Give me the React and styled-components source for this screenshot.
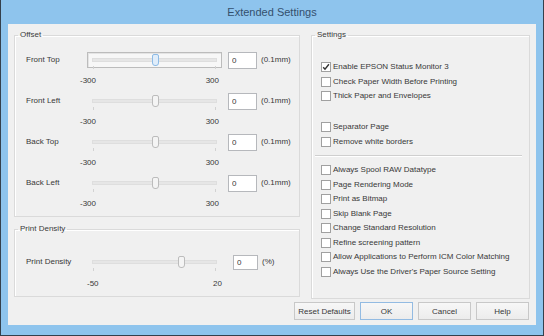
import React from "react";
import styled, { createGlobalStyle } from "styled-components";

const GlobalStyle = createGlobalStyle`
	html,
	body {
		margin: 0;
		padding: 0;
		background: #ffffff;
	}
	body {
		font-family: "Liberation Sans", Arial, sans-serif;
		color: #383838;
	}
`;

const Window = styled.div`
	box-sizing: border-box;
	width: 544px;
	height: 336px;
	display: flex;
	flex-direction: column;
	padding: 0 7px 10px;
	background: #8ec4ed;
	border: 1px solid #34404c;
	border-top: none;
`;

const TitleBar = styled.div`
	height: 24px;
	flex: none;
	display: flex;
	align-items: center;
	justify-content: center;
	font-size: 11px;
	color: #34506d;
`;

const Body = styled.div`
	flex: 1;
	display: grid;
	grid-template-columns: 286px 219px;
	grid-template-rows: 1fr auto;
	column-gap: 11px;
	row-gap: 3px;
	padding: 6px 6px 5px;
	background: #f0f0f0;
	font-size: 8px;
`;

const Column = styled.div`
	display: flex;
	flex-direction: column;
	gap: 7px;
`;

const Group = styled.fieldset`
	margin: 0;
	min-width: 0;
	padding: ${(p) => p.$pad};
	border: 1px solid #dadada;
	box-shadow: inset 1px 1px 0 #ffffff;
	display: flex;
	flex-direction: column;
	gap: 6px;
	flex: ${(p) => (p.$grow ? 1 : "none")};
`;

const Legend = styled.legend`
	padding: 0 2px;
	margin-left: 3px;
	font-size: 8px;
	line-height: 10px;
	color: #3a3a3a;
`;

const SliderBlock = styled.div`
	display: grid;
	grid-template-columns: 61px 135px auto;
	grid-template-rows: 18px 10px;
	row-gap: ${(p) => p.$scaleGap}px;
	padding-left: 11px;
	align-items: center;
`;

const RowLabel = styled.span`
	line-height: 10px;
`;

const SliderBox = styled.div`
	box-sizing: border-box;
	height: 16px;
	display: flex;
	align-items: center;
	padding: 0 4px;
	border: 1px solid ${(p) => (p.$focused ? "#bcbcbc" : "transparent")};
	background: ${(p) => (p.$focused ? "#f7f7f7" : "transparent")};
	box-shadow: ${(p) => (p.$focused ? "inset 1px 1px 0 #e4e4e4" : "none")};
`;

const Track = styled.div`
	position: relative;
	flex: 1;
	height: 2px;
	background: #e6e6e6;
	border: 1px solid #dedede;

	&::before,
	&::after {
		content: "";
		position: absolute;
		top: 7px;
		width: 1px;
		height: 3px;
		background: #d2d2d2;
	}
	&::before {
		left: 0;
	}
	&::after {
		right: 0;
	}
`;

const Thumb = styled.div`
	position: absolute;
	top: -5px;
	width: 5px;
	height: 10px;
	margin-left: -3px;
	border: 1px solid ${(p) => (p.$active ? "#8dbbe6" : "#bcbcbc")};
	border-radius: 2px 2px 3px 3px;
	background: ${(p) => (p.$active ? "#e0edfa" : "#f4f4f4")};
`;

const InputGroup = styled.div`
	display: flex;
	align-items: center;
	gap: 4px;
	margin-left: ${(p) => p.$offset}px;
`;

const Field = styled.input`
	box-sizing: border-box;
	width: ${(p) => p.$w}px;
	height: ${(p) => p.$h}px;
	margin: 0;
	padding: 0 3px;
	border: 1px solid #b6b8bc;
	background: #ffffff;
	font-family: inherit;
	font-size: 8px;
	color: #383838;
	outline: none;
`;

const Unit = styled.span`
	line-height: 10px;
	white-space: nowrap;
`;

const Scale = styled.div`
	grid-column: 2;
	display: flex;
	justify-content: space-between;
	line-height: 10px;
	margin: 0 ${(p) => p.$right}px 0 ${(p) => p.$left}px;
`;

const CheckList = styled.div`
	display: flex;
	flex-direction: column;
	padding: 20px 0 0 9px;
`;

const CheckRow = styled.label`
	display: flex;
	align-items: center;
	gap: 2px;
	height: 14.5px;
	line-height: 10px;
	white-space: nowrap;
`;

const Box = styled.span`
	box-sizing: border-box;
	width: 10px;
	height: 10px;
	flex: none;
	display: flex;
	align-items: center;
	justify-content: center;
	border: 1px solid #a0a0a0;
	background: #ffffff;
`;

const Spacer = styled.div`
	height: ${(p) => p.$h}px;
`;

const Divider = styled.div`
	height: 1px;
	margin: 6px 7px 7px -6px;
	background: #cfcfcf;
	box-shadow: 0 1px 0 #ffffff;
`;

const ButtonRow = styled.div`
	grid-column: 1 / -1;
	display: flex;
	justify-content: flex-end;
	gap: 5px;
	padding-right: 1px;
`;

const Button = styled.button`
	box-sizing: border-box;
	width: ${(p) => p.$w}px;
	height: 18px;
	margin: 0;
	padding: 0;
	border: 1px solid ${(p) => (p.$default ? "#93bbe2" : "#c8c8c8")};
	background: linear-gradient(#f7f7f7, #ececec);
	font-family: inherit;
	font-size: 8px;
	color: #383838;
`;

const offsets = [
	{ label: "Front Top", focused: true },
	{ label: "Front Left" },
	{ label: "Back Top" },
	{ label: "Back Left" },
];

const settingsTop = [
	{ label: "Enable EPSON Status Monitor 3", checked: true },
	{ label: "Check Paper Width Before Printing" },
	{ label: "Thick Paper and Envelopes" },
];

const settingsMid = [{ label: "Separator Page" }, { label: "Remove white borders" }];

const settingsBottom = [
	{ label: "Always Spool RAW Datatype" },
	{ label: "Page Rendering Mode" },
	{ label: "Print as Bitmap" },
	{ label: "Skip Blank Page" },
	{ label: "Change Standard Resolution" },
	{ label: "Refine screening pattern" },
	{ label: "Allow Applications to Perform ICM Color Matching" },
	{ label: "Always Use the Driver's Paper Source Setting" },
];

function Slider({ min, max, value, focused }) {
	const pct = ((value - min) / (max - min)) * 100;
	return (
		<SliderBox $focused={focused}>
			<Track>
				<Thumb $active={focused} style={{ left: `${pct}%` }} />
			</Track>
		</SliderBox>
	);
}

function SliderSetting({ label, min, max, unit, focused, inputOffset, inputW, inputH, scaleGap, scaleLeft, scaleRight }) {
	return (
		<SliderBlock $scaleGap={scaleGap}>
			<RowLabel>{label}</RowLabel>
			<Slider min={min} max={max} value={0} focused={focused} />
			<InputGroup $offset={inputOffset}>
				<Field readOnly value="0" $w={inputW} $h={inputH} />
				<Unit>{unit}</Unit>
			</InputGroup>
			<Scale $left={scaleLeft} $right={scaleRight}>
				<span>{min}</span>
				<span>{max}</span>
			</Scale>
		</SliderBlock>
	);
}

function Check({ label, checked }) {
	return (
		<CheckRow>
			<Box>
				{checked && (
					<svg width="8" height="8" viewBox="0 0 8 8">
						<path d="M1.2 4.2 L3 6.2 L6.9 1.3" fill="none" stroke="#333" strokeWidth="1.4" />
					</svg>
				)}
			</Box>
			{label}
		</CheckRow>
	);
}

export default function App() {
	return (
		<>
			<GlobalStyle />
			<Window>
				<TitleBar>Extended Settings</TitleBar>
				<Body>
					<Column>
						<Group $pad="11px 0 7px 0">
							<Legend>Offset</Legend>
							{offsets.map((o) => (
								<SliderSetting
									key={o.label}
									label={o.label}
									min={-300}
									max={300}
									unit="(0.1mm)"
									focused={o.focused}
									inputOffset={6}
									inputW={29}
									inputH={17}
									scaleGap={7}
									scaleLeft={-7}
									scaleRight={3}
								/>
							))}
						</Group>
						<Group $pad="19px 0 7px 0">
							<Legend>Print Density</Legend>
							<SliderSetting
								label="Print Density"
								min={-50}
								max={20}
								unit="(%)"
								inputOffset={11}
								inputW={25}
								inputH={15}
								scaleGap={8}
								scaleLeft={0}
								scaleRight={0}
							/>
						</Group>
					</Column>
					<Group $pad="0" $grow>
						<Legend>Settings</Legend>
						<CheckList>
							{settingsTop.map((s) => (
								<Check key={s.label} {...s} />
							))}
							<Spacer $h={16.5} />
							{settingsMid.map((s) => (
								<Check key={s.label} {...s} />
							))}
							<Divider />
							{settingsBottom.map((s) => (
								<Check key={s.label} {...s} />
							))}
						</CheckList>
					</Group>
					<ButtonRow>
						<Button $w={61}>Reset Defaults</Button>
						<Button $w={53} $default>
							OK
						</Button>
						<Button $w={53}>Cancel</Button>
						<Button $w={53}>Help</Button>
					</ButtonRow>
				</Body>
			</Window>
		</>
	);
}
